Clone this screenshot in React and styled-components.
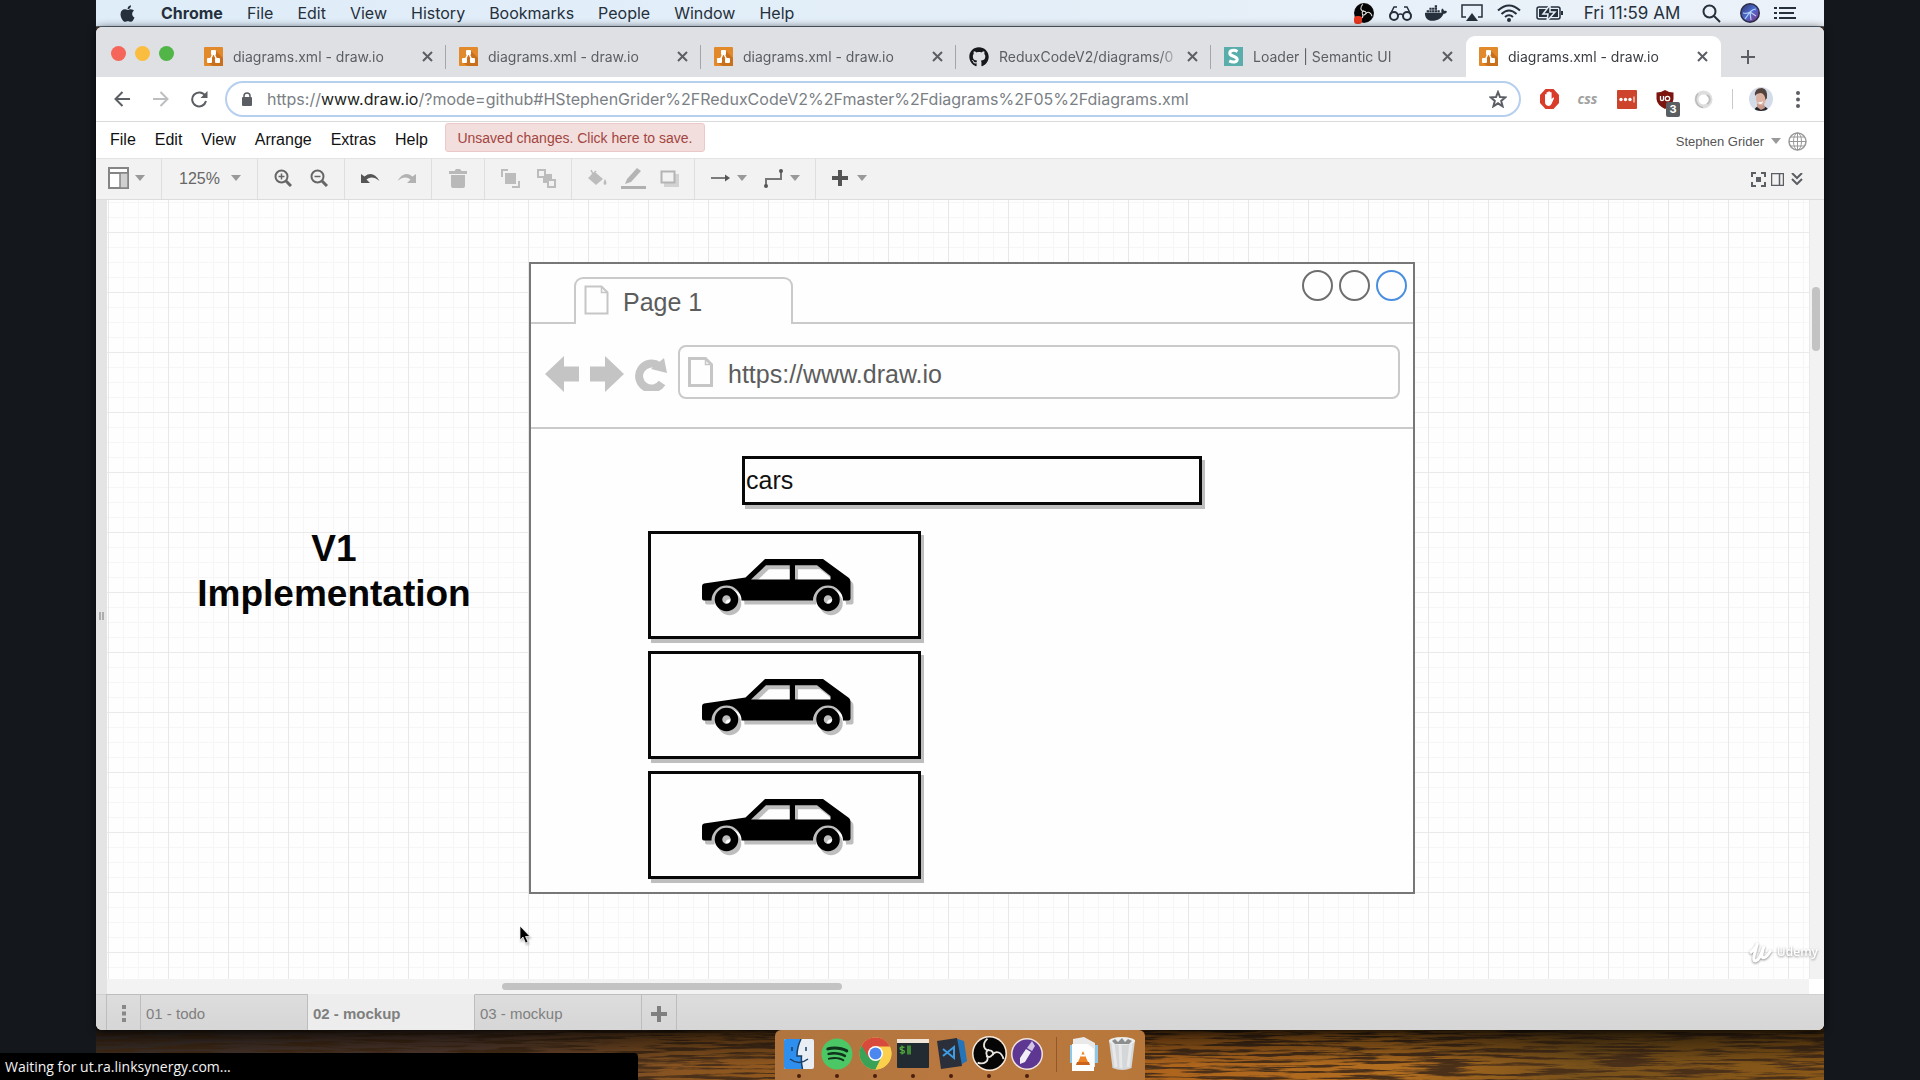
import React from "react";
import styled, { createGlobalStyle, css } from "styled-components";
import { FaApple, FaDocker, FaGithub, FaSpotify } from "react-icons/fa";

const helvetica = `"Liberation Sans", Arial, sans-serif`;
const system = `Inter, Roboto, "Liberation Sans", sans-serif`;

const GlobalStyle = createGlobalStyle`
  * { box-sizing: border-box; }
  body { margin: 0; background: #14181d; font-family: ${helvetica}; overflow: hidden; }
  button, input, select { font: inherit; color: inherit; background: none; border: 0; padding: 0; margin: 0; outline: 0; }
  a { color: inherit; text-decoration: none; }
  svg { display: block; flex: none; }
`;

/* ---------- desktop ---------- */
const Desktop = styled.div`
  position: relative;
  display: flex;
  flex-direction: column;
  height: 100vh;
  margin: 0 5%;
  background: #4a3426;
`;
const Wallpaper = styled.svg`
  position: absolute;
  bottom: 0;
  left: 0;
  width: 100%;
  height: 60px;
`;
const MenuBar = styled.header`
  position: relative;
  display: flex;
  align-items: center;
  height: 27px;
  padding: 0 24px 0 22px;
  background: linear-gradient(90deg, #dfedf9, #e3eef8 50%, #ecf2f9);
  border-bottom: 1px solid #5d6a77;
  font: 400 16px/26px ${system};
  color: #25303c;
`;
const MenuList = styled.nav`
  display: flex;
  gap: 24px;
  flex: 1;
`;
const MenuLink = styled.a`
  display: flex;
  align-items: center;
  white-space: nowrap;
  font-weight: ${(p) => (p.$bold ? 700 : 400)};
`;
const StatusItem = styled.button`
  display: flex;
  justify-content: center;
  align-items: center;
  width: ${(p) => p.$w || 36}px;
`;
const Clock = styled.time`
  width: 120px;
  text-align: center;
  font-size: 17px;
  white-space: nowrap;
`;

/* ---------- browser ---------- */
const BrowserWindow = styled.main`
  position: relative;
  display: flex;
  flex-direction: column;
  flex: 1;
  min-height: 0;
  border-radius: 6px;
  overflow: hidden;
  background: #fff;
  box-shadow: 0 1px 8px #000b;
`;
const TabStrip = styled.div`
  display: flex;
  align-items: flex-end;
  height: 50px;
  background: #dee0e4;
`;
const Lights = styled.div`
  display: flex;
  align-self: stretch;
  align-items: center;
  gap: 9px;
  width: 95px;
  padding: 3px 0 0 15px;
`;
const Light = styled.button`
  width: 15px;
  height: 15px;
  border-radius: 50%;
  background: ${(p) => p.$color};
`;
const TabBox = styled.div`
  position: relative;
  display: flex;
  align-items: center;
  gap: 10px;
  flex: 0 1 255px;
  min-width: 0;
  height: 41px;
  padding: 0 12px 0 13px;
  font: 400 14px/20px ${system};
  color: #5b5e63;
  &::after {
    content: "";
    position: absolute;
    right: 0;
    width: 1px;
    height: 24px;
    background: ${(p) => (p.$divider ? "#a2a5aa" : "transparent")};
  }
  ${(p) =>
    p.$active &&
    css`
      background: #fff;
      color: #3a3d42;
      border-radius: 9px 9px 0 0;
    `}
`;
const TabTitle = styled.span`
  flex: 1;
  min-width: 0;
  margin-right: -6px;
  overflow: hidden;
  white-space: nowrap;
  mask-image: linear-gradient(90deg, #000 88%, transparent);
`;
const IconButton = styled.button`
  position: relative;
  display: flex;
  align-items: center;
  justify-content: center;
  flex: none;
  width: ${(p) => p.$w || 36}px;
  height: ${(p) => p.$h || 36}px;
  color: ${(p) => p.$color || "#5b5e63"};
  opacity: ${(p) => (p.$dim ? 0.4 : 1)};
`;
const AddressRow = styled.div`
  display: flex;
  align-items: center;
  height: 45px;
  padding: 0 7px 0 6px;
  border-bottom: 1px solid #d9dadb;
`;
const Omnibox = styled.div`
  display: flex;
  align-items: center;
  flex: 1;
  height: 36px;
  margin: 0 9px 0 6px;
  padding: 0 5px 0 15px;
  border: 2px solid #b6cfee;
  border-radius: 18px;
  font: 400 16px/24px ${system};
  color: #7b7f85;
`;
const UrlText = styled.div`
  flex: 1;
  padding-left: 15px;
  white-space: nowrap;
  outline: 0;
`;
const Host = styled.span`
  color: #1d1f22;
`;
const Divider = styled.span`
  width: 1px;
  height: 20px;
  margin: 0 10px;
  background: #c9cacc;
`;
const ExtText = styled.span`
  font: italic 700 14px/20px "Open Sans", sans-serif;
  color: #a2a2a2;
`;
const Badge = styled.span`
  position: absolute;
  right: 4px;
  bottom: 0;
  width: 14px;
  height: 15px;
  border-radius: 2px;
  background: #5b5e61;
  color: #fff;
  font: 700 11px/15px ${system};
`;

/* ---------- editor ---------- */
const EditorMenu = styled.div`
  display: flex;
  align-items: center;
  height: 36px;
  padding: 0 17px 0 14px;
  font-size: 16px;
  color: #111;
`;
const EditorNav = styled.nav`
  display: flex;
  gap: 19px;
`;
const SaveNotice = styled.button`
  width: 260px;
  height: 29px;
  margin: -5px 0 0 17px;
  border: 1px solid #ecc9c8;
  border-radius: 3px;
  background: #f2dedd;
  color: #a2453f;
  font-size: 14px;
  white-space: nowrap;
`;
const Account = styled.button`
  display: flex;
  align-items: center;
  gap: 7px;
  margin-left: auto;
  padding-top: 2px;
  font-size: 13px;
  color: #555;
`;
const Toolbar = styled.div`
  display: flex;
  height: 42px;
  border-top: 1px solid #e3e3e3;
  border-bottom: 1px solid #dcdcdc;
  background: #f2f2f2;
  padding-right: 18px;
`;
const ToolGroup = styled.div`
  display: flex;
  align-items: center;
  padding: 0 ${(p) => p.$pad ?? 7}px 2px;
  border-right: 1px solid ${(p) => (p.$last ? "transparent" : "#dedede")};
`;
const DropButton = styled.button`
  display: flex;
  align-items: center;
  gap: ${(p) => p.$gap || 7}px;
  width: 53px;
  height: 36px;
  padding-left: ${(p) => p.$pl ?? 9}px;
  color: #555;
`;
const ZoomLabel = styled.label`
  display: flex;
  align-items: center;
  width: 96px;
  padding: 0 16px 2px 17px;
  border-right: 1px solid #dedede;
  font-size: 16px;
  color: #666;
`;
const ZoomSelect = styled.select`
  appearance: none;
  flex: 1;
  width: 50px;
`;
const ViewTools = styled.div`
  display: flex;
  align-items: center;
  margin-left: auto;
`;

const Workspace = styled.div`
  display: flex;
  flex: 1;
  min-height: 0;
`;
const SideHandle = styled.div`
  display: flex;
  align-items: center;
  justify-content: center;
  width: 11px;
  padding-top: 38px;
  background: #e4e4e4;
`;
const Editor = styled.div`
  display: flex;
  flex-direction: column;
  flex: 1;
  min-width: 0;
`;
const CanvasRow = styled.div`
  display: flex;
  flex: 1;
  min-height: 0;
`;
const Canvas = styled.section`
  position: relative;
  flex: 1;
  overflow: hidden;
  background-color: #fefefe;
  background-image: linear-gradient(90deg, #e8e8e8 1px, transparent 1px),
    linear-gradient(#eaeaea 1px, transparent 1px),
    linear-gradient(90deg, #f6f6f6 1px, transparent 1px),
    linear-gradient(#f6f6f6 1px, transparent 1px);
  background-size: 60px 60px, 60px 60px, 15px 15px, 15px 15px;
  background-position: 1px 32px;
`;
const VScroll = styled.div`
  width: 15px;
  padding: 87px 0 0 2px;
  background: #f2f2f2;
  border-left: 1px solid #e9e9e9;
`;
const HScroll = styled.div`
  display: flex;
  align-items: center;
  height: 15px;
  margin-right: 15px;
  padding-left: 23%;
  background: #f3f3f3;
`;
const Thumb = styled.div`
  width: ${(p) => p.$w};
  height: ${(p) => p.$h};
  border-radius: 4px;
  background: #c3c3c3;
`;
const PageTabs = styled.nav`
  display: flex;
  height: 36px;
  padding-left: 10px;
  background: linear-gradient(#dddddd, #d6d6d6);
  box-shadow: inset 0 1px #d0d0d0;
`;
const PageTab = styled.button`
  display: flex;
  align-items: center;
  justify-content: ${(p) => (p.$w < 100 ? "center" : "flex-start")};
  width: ${(p) => p.$w}px;
  padding: 2px 0 0 ${(p) => (p.$w < 100 ? 0 : 5)}px;
  border: 1px solid #bdbdbd;
  border-width: 1px 1px 0 0;
  color: #7f7f7f;
  font-size: 15px;
  font-weight: ${(p) => (p.$active ? 700 : 400)};
  background: ${(p) => (p.$active ? "#ededed" : "transparent")};
  border-top-color: ${(p) => (p.$active ? "#ededed" : "#bdbdbd")};
  &:first-child {
    border-left-width: 1px;
  }
`;

/* ---------- diagram nodes ---------- */
const Node = styled.div`
  position: absolute;
  left: ${(p) => p.$x}px;
  top: ${(p) => p.$y}px;
`;
const Heading = styled.h1`
  margin: 0;
  width: 290px;
  text-align: center;
  font: 700 37px/45px ${helvetica};
  color: #050505;
`;
const Mock = styled.div`
  display: flex;
  flex-direction: column;
  width: 886px;
  height: 632px;
  border: 2px solid #777;
  background: #fefefe;
  color: #5c5c5c;
  font-size: 25px;
`;
const MockTabs = styled.div`
  display: flex;
  height: 60px;
  align-items: flex-end;
`;
const Rule = styled.span`
  flex: ${(p) => (p.$w ? `0 0 ${p.$w}px` : 1)};
  height: 60px;
  display: flex;
  justify-content: flex-end;
  gap: 6px;
  padding: 6px 6px 0 0;
  border-bottom: 2px solid #cacaca;
`;
const MockTab = styled.div`
  display: flex;
  align-items: center;
  gap: 14px;
  width: 219px;
  height: 47px;
  padding: 0 0 3px 8px;
  border: 2px solid #cacaca;
  border-bottom: 0;
  border-radius: 9px 9px 0 0;
`;
const MockLabel = styled.span`
  padding-top: 4px;
`;
const Ring = styled.span`
  width: 31px;
  height: 31px;
  border: 2px solid ${(p) => p.$color || "#6e6e6e"};
  border-radius: 50%;
`;
const MockNav = styled.div`
  display: flex;
  align-items: center;
  gap: 11px;
  height: 105px;
  padding: 0 13px 3px 14px;
  border-bottom: 2px solid #cacaca;
`;
const MockUrl = styled.div`
  display: flex;
  align-items: center;
  gap: 15px;
  flex: 1;
  height: 54px;
  margin-bottom: 5px;
  padding: 1px 8px 0;
  border: 2px solid #cacaca;
  border-radius: 8px;
`;
const MockBody = styled.div`
  display: flex;
  flex-direction: column;
  gap: 26px;
  padding: 27px 0 0 117px;
`;
const SearchInput = styled.input`
  && {
    width: 460px;
    height: 49px;
    margin-left: 94px;
    padding: 0 1px 1px;
    border: 3px solid #080808;
    background: #fefefe;
    box-shadow: 3px 4px #bebebe;
    color: #111;
  }
`;
const CardList = styled.div`
  display: flex;
  flex-direction: column;
  gap: 12px;
`;
const Card = styled.div`
  display: flex;
  align-items: center;
  justify-content: center;
  width: 273px;
  height: 108px;
  padding-right: 16px;
  border: 3px solid #080808;
  box-shadow: 3px 4px #bebebe;
`;
const CarSvg = styled.svg`
  overflow: visible;
  filter: drop-shadow(3px 4px 0 #bebebe);
`;
const Watermark = styled.div`
  position: absolute;
  right: 6px;
  bottom: 67px;
  display: flex;
  align-items: center;
  gap: 4px;
  color: #fff;
  font: 600 12px/22px "Open Sans", sans-serif;
  filter: drop-shadow(0 1px 1px #8c8c8c);
`;
const Pointer = styled.svg`
  filter: drop-shadow(1px 2px 1px #0004);
`;

/* ---------- dock ---------- */
const DockRow = styled.footer`
  position: relative;
  display: flex;
  justify-content: center;
  height: 50px;
`;
const Dock = styled.div`
  display: flex;
  padding: 0 4px 0 5px;
  border-radius: 6px 6px 0 0;
  background: linear-gradient(90deg, #b0753f, #b9783f 50%, #b8773a);
`;
const DockItem = styled.button`
  position: relative;
  display: flex;
  align-items: center;
  justify-content: center;
  width: 38px;
  height: 47px;
  &::after {
    content: "";
    position: absolute;
    bottom: -1px;
    width: 4px;
    height: 4px;
    border-radius: 50%;
    background: ${(p) => (p.$running ? "#4b1d0c" : "transparent")};
  }
`;
const DockRule = styled.span`
  width: 1px;
  height: 35px;
  margin: 7px 8px 0 10px;
  background: #94592b;
`;
const LinkStatus = styled.div`
  position: fixed;
  left: 0;
  bottom: 0;
  width: 638px;
  height: 27px;
  padding-left: 5px;
  border-radius: 0 4px 0 0;
  background: #000;
  color: #f3f3f3;
  font: 400 14px/27px "Open Sans", "Noto Sans", sans-serif;
`;

/* ---------- drawings ---------- */
const Caret = ({ color = "#999" }) => (
  <svg width="10" height="6" viewBox="0 0 10 6"><path d="M0 0h10L5 6z" fill={color} /></svg>
);
const Stroke = ({ size = 20, w = 2, h, children }) => (
  <svg width={size} height={h || size} viewBox={`0 0 ${size} ${h || size}`} fill="none" stroke="currentColor" strokeWidth={w}>
    {children}
  </svg>
);
const DrawioIcon = () => (
  <svg width="19" height="19" viewBox="0 0 19 19">
    <rect width="19" height="19" rx="1" fill="#e28a2b" />
    <path d="M12 4l7 7v8H9l-5-3z" fill="#c9701c" />
    <path d="M9.500 6L6 13M9.500 6L13 13" stroke="#fff" strokeWidth="1.500" />
    <rect x="7" y="3" width="5" height="5" rx="1" fill="#fff" />
    <rect x="3" y="11" width="5" height="5" rx="1" fill="#fff" />
    <rect x="11" y="11" width="5" height="5" rx="1" fill="#fff" />
  </svg>
);
const SemanticIcon = () => (
  <svg width="19" height="19" viewBox="0 0 19 19">
    <rect width="19" height="19" fill="#59aeab" />
    <path d="M13.500 4.500C10 2.500 5.500 3.200 5.800 6.500c.3 3 7.400 2.500 7.400 5.800 0 3.200-4.500 3.400-8 1.600" fill="none" stroke="#fff" strokeWidth="3" />
  </svg>
);
const CloseIcon = () => <Stroke size={11}><path d="M1 1l9 9M10 1l-9 9" /></Stroke>;
const ObsIcon = ({ size, rim }) => (
  <svg width={size} height={size} viewBox="0 0 34 34">
    <circle cx="17" cy="17" r="17" fill={rim} />
    <circle cx="17" cy="17" r="15.500" fill="#050505" />
    {[0, 120, 240].map((a) => (
      <path key={a} transform={`rotate(${a} 17 17)`} d="M15 2.500C10 7 10.500 13.500 17 14q4 .5 3.500 4.500"
        fill="none" stroke="#e8e4e0" strokeWidth="1.800" />
    ))}
  </svg>
);
const PageIcon = ({ w = 2 }) => (
  <svg width="25" height="30" viewBox="0 0 25 30" fill="none" stroke="#c6c6c6" strokeWidth={w}>
    <path d="M1.500 1.500h16l6 6v21h-22z" /><path d="M17.500 1.500v6h6" strokeWidth="1.500" />
  </svg>
);
const Car = () => (
  <CarSvg width="149" height="52" viewBox="0 0 149 52">
    <path fillRule="evenodd"
      d="M63 0h58l26 19q1.500 1.500 1.500 4v16.500q0 2-2 2H141a15 15 0 0 0-30 0H39.500a15 15 0 0 0-30 0H2q-2 0-2-2V27q0-2 2-2.500L43.500 18.500zM49 20.500h38.800V6.300H64zM93 6.300v14.200h35.500V17L115 6.300z" />
    {[24.5, 126].map((x) => <circle key={x} cx={x} cy="40.500" r="8" fill="none" stroke="#000" strokeWidth="7.500" />)}
  </CarSvg>
);
const Siri = () => (
  <svg width="20" height="20" viewBox="0 0 20 20">
    <defs><linearGradient id="siri" x1="0" y1="0" x2="1" y2="1"><stop offset="0" stopColor="#33306a" /><stop offset=".5" stopColor="#4a6fd4" /><stop offset="1" stopColor="#8b2d7b" /></linearGradient></defs>
    <circle cx="10" cy="10" r="10" fill="#2a2e48" /><circle cx="10" cy="10" r="8.500" fill="url(#siri)" />
    <path d="M10 9L5 16M10 9l1 8M10 9l6 4M3 10q4 1 7-1 3-3 6-3" fill="none" stroke="#cfe8ff" strokeWidth="1.200" opacity=".8" />
  </svg>
);

const tabs = [
  { title: "diagrams.xml - draw.io", icon: <DrawioIcon />, divider: true },
  { title: "diagrams.xml - draw.io", icon: <DrawioIcon />, divider: true },
  { title: "diagrams.xml - draw.io", icon: <DrawioIcon />, divider: true },
  { title: "ReduxCodeV2/diagrams/0", icon: <FaGithub size={20} color="#16181b" />, divider: true },
  { title: "Loader | Semantic UI", icon: <SemanticIcon /> },
  { title: "diagrams.xml - draw.io", icon: <DrawioIcon />, active: true },
];

function SystemBar() {
  return (
    <MenuBar>
      <MenuList aria-label="System menu">
        <MenuLink href="#apple" aria-label="Apple"><FaApple size={19} /></MenuLink>
        {["Chrome", "File", "Edit", "View", "History", "Bookmarks", "People", "Window", "Help"].map((m, i) => (
          <MenuLink key={m} href={`#${m}`} $bold={i === 0}>{m}</MenuLink>
        ))}
      </MenuList>
      <StatusItem aria-label="OBS">
        <svg width="21" height="21" viewBox="0 0 21 21"><ObsIcon size={20} rim="#111" /><rect x="0" y="13" width="8" height="8" rx="3" fill="#e8371f" /></svg>
      </StatusItem>
      <StatusItem aria-label="Reader">
        <Stroke size={23} h={16} w={2}><circle cx="5" cy="11" r="4" /><circle cx="18" cy="11" r="4" /><path d="M9 10q2.500-2 5 0M1 10L5 2l3 0M22 10L18 2l-3 0" strokeWidth="1.500" /></Stroke>
      </StatusItem>
      <StatusItem aria-label="Docker"><FaDocker size={22} /></StatusItem>
      <StatusItem aria-label="AirPlay">
        <svg width="22" height="18" viewBox="0 0 22 18"><path d="M5 13H1V1h20v12h-4" fill="none" stroke="currentColor" strokeWidth="1.500" /><path d="M11 9l6 8H5z" fill="currentColor" /></svg>
      </StatusItem>
      <StatusItem aria-label="Wi-Fi" $w={38}>
        <Stroke size={24} h={18} w={2}><path d="M1 6.500q11-10 22 0M4.500 10q7.500-7 15 0M8 13q4-3.500 8 0" /><circle cx="12" cy="16" r="1" fill="currentColor" /></Stroke>
      </StatusItem>
      <StatusItem aria-label="Battery" $w={44}>
        <svg width="28" height="16" viewBox="0 0 28 16"><rect x="1" y="2" width="23" height="12" rx="2" fill="none" stroke="currentColor" strokeWidth="1.500" /><rect x="3" y="4" width="19" height="8" fill="currentColor" /><path d="M26 6v4" stroke="currentColor" strokeWidth="2" /><path d="M14 0L7 9h5l-1 7 8-9h-5z" fill="currentColor" stroke="#e8f0f8" strokeWidth="1.500" /></svg>
      </StatusItem>
      <Clock>Fri 11:59 AM</Clock>
      <StatusItem aria-label="Search" $w={38}><Stroke size={19} w={2}><circle cx="7.500" cy="7.500" r="6" /><path d="M12 12l6 6" /></Stroke></StatusItem>
      <StatusItem aria-label="Siri" $w={40}><Siri /></StatusItem>
      <StatusItem aria-label="Notifications" $w={30}><Stroke size={22} h={14} w={2}><path d="M5 2h17M5 7h15M5 12h17M0 2h3M0 7h3M0 12h3" /></Stroke></StatusItem>
    </MenuBar>
  );
}

function BrowserChrome() {
  return (
    <>
      <TabStrip>
        <Lights>
          <Light $color="#f5655a" aria-label="Close window" />
          <Light $color="#fbbd3f" aria-label="Minimize window" />
          <Light $color="#51b548" aria-label="Zoom window" />
        </Lights>
        {tabs.map((t, i) => (
          <TabBox key={i} $active={t.active} $divider={t.divider}>
            {t.icon}
            <TabTitle>{t.title}</TabTitle>
            <IconButton $w={14} $h={20} aria-label="Close tab"><CloseIcon /></IconButton>
          </TabBox>
        ))}
        <IconButton $w={54} $h={41} aria-label="New tab"><Stroke size={14} w={2}><path d="M7 0v14M0 7h14" /></Stroke></IconButton>
      </TabStrip>
      <AddressRow>
        <IconButton $w={39} aria-label="Back"><Stroke size={16}><path d="M16 8H2M8.500 1L1.500 8l7 7" /></Stroke></IconButton>
        <IconButton $w={39} $dim aria-label="Forward"><Stroke size={16}><path d="M0 8h14M7.500 1l7 7-7 7" /></Stroke></IconButton>
        <IconButton $w={39} aria-label="Reload"><svg width="17" height="17" viewBox="0 0 17 17"><path d="M14 4.500A7 7 0 1 0 15 10" fill="none" stroke="currentColor" strokeWidth="2" /><path d="M16.500 0v7h-7z" fill="currentColor" /></svg></IconButton>
        <Omnibox>
          <svg width="10" height="14" viewBox="0 0 10 14"><rect y="5" width="10" height="9" rx="1" fill="#5b5e63" /><path d="M2 6V4a3 3 0 0 1 6 0v2" fill="none" stroke="#5b5e63" strokeWidth="1.500" /></svg>
          <UrlText role="textbox" aria-label="Address" tabIndex={0}>
            https://<Host>www.draw.io</Host>/?mode=github#HStephenGrider%2FReduxCodeV2%2Fmaster%2Fdiagrams%2F05%2Fdiagrams.xml
          </UrlText>
          <IconButton $w={32} $h={32} aria-label="Bookmark"><Stroke size={18} w={2}><path d="M9 2l2 5 5.500.3-4.300 3.600 1.400 5.400L9 13.300l-4.600 3 1.400-5.400L1.500 7.300 7 7z" /></Stroke></IconButton>
        </Omnibox>
        <IconButton $w={38} aria-label="AdBlock">
          <svg width="19" height="20" viewBox="0 0 19 20"><path d="M5.500 0h8L19 6v8l-5.500 6h-8L0 14V6z" fill="#d93c28" /><path d="M5 9.500V5.500q1-1 1.500 0V8V3.500q1-1 1.700 0V8V2.700q1-1 1.700 0V8V3.500q1-1 1.700 0V10l1.500-1.500q1.200-.3 1 .7L11.500 15q-1 2-3 2Q5 16.500 5 13z" fill="#fff" /></svg>
        </IconButton>
        <IconButton $w={39} aria-label="CSS"><ExtText>css</ExtText></IconButton>
        <IconButton $w={39} aria-label="LastPass"><svg width="20" height="19" viewBox="0 0 20 19"><rect width="20" height="19" rx="1" fill="#cd432c" /><circle cx="4" cy="9.500" r="1.700" fill="#fff" /><circle cx="8.500" cy="9.500" r="1.700" fill="#fff" /><circle cx="13" cy="9.500" r="1.700" fill="#fff" /><path d="M17 6.500v6" stroke="#fff" /></svg></IconButton>
        <IconButton $w={38} aria-label="uBlock">
          <svg width="18" height="19" viewBox="0 0 18 19"><path d="M9 0q4 2.500 8.500 2.500V9Q17 15 9 19 1 15 .5 9V2.500Q5 2.500 9 0z" fill="#7c1510" /><path d="M4.500 6v3.500q0 1 1.500 1t1.500-1V6" fill="none" stroke="#fff" strokeWidth="1.300" /><circle cx="11.500" cy="8.500" r="2.200" fill="none" stroke="#fff" strokeWidth="1.300" /></svg>
          <Badge>3</Badge>
        </IconButton>
        <IconButton $w={38} aria-label="Extension"><svg width="19" height="19" viewBox="0 0 19 19"><circle cx="9.500" cy="9.500" r="7" fill="none" stroke="#dedede" strokeWidth="4" /><path d="M4 3.500a8.500 8.500 0 0 0 5 14" fill="none" stroke="#bbb" strokeWidth="1.500" /><path d="M13 5a5 5 0 0 1 0 9" fill="none" stroke="#bcbcbc" strokeWidth="1.500" /></svg></IconButton>
        <Divider />
        <IconButton $w={36} aria-label="Profile">
          <svg width="24" height="24" viewBox="0 0 24 24"><defs><clipPath id="av"><circle cx="12" cy="12" r="12" /></clipPath></defs><g clipPath="url(#av)"><rect width="24" height="24" fill="#d4dbe9" /><path d="M5 24q1-5 7-5t8 5z" fill="#23252c" /><path d="M8 17h7l1 4-4 2-4-3z" fill="#c99a8a" /><ellipse cx="12" cy="11.500" rx="5" ry="7" fill="#dcb2a3" /><path d="M6 9q-1-8 7-8 6 1 5 10l-1.500 2Q16 7 12 6 8 6 6 9z" fill="#54423c" /><path d="M9 15q3 1 5-1-.5 3-2.500 3T9 15z" fill="#fff" /></g></svg>
        </IconButton>
        <IconButton $w={38} aria-label="Chrome menu"><svg width="4" height="17" viewBox="0 0 4 17" fill="currentColor"><circle cx="2" cy="2" r="2" /><circle cx="2" cy="8.500" r="2" /><circle cx="2" cy="15" r="2" /></svg></IconButton>
      </AddressRow>
    </>
  );
}

const Magnifier = ({ plus }) => (
  <Stroke size={18} w={2}><circle cx="7.500" cy="7.500" r="6" /><path d="M12 12l5 5" strokeWidth="3" /><path d={plus ? "M4.500 7.500h6M7.500 4.500v6" : "M4.500 7.500h6"} strokeWidth="1.500" /></Stroke>
);

function EditorToolbar() {
  return (
    <Toolbar role="toolbar">
      <ToolGroup $pad={6}>
        <DropButton $pl={6} $gap={6} aria-label="View panels">
          <svg width="21" height="22" viewBox="0 0 21 22"><rect x="1" y="1" width="19" height="20" fill="#fff" stroke="#858585" strokeWidth="2" /><path d="M1 6h19" stroke="#858585" strokeWidth="2" /><rect x="12" y="6" width="8" height="15" fill="#d0d0d0" stroke="#858585" strokeWidth="1.500" /></svg>
          <Caret />
        </DropButton>
      </ToolGroup>
      <ZoomLabel>
        <ZoomSelect aria-label="Zoom" defaultValue="125%"><option>125%</option></ZoomSelect>
        <Caret />
      </ZoomLabel>
      <ToolGroup>
        <IconButton $color="#666" aria-label="Zoom in"><Magnifier plus /></IconButton>
        <IconButton $color="#666" aria-label="Zoom out"><Magnifier /></IconButton>
      </ToolGroup>
      <ToolGroup>
        <IconButton $color="#555" aria-label="Undo"><svg width="19" height="11" viewBox="0 0 19 11" fill="currentColor"><path d="M0 1v9h9L5.500 6.500Q11 2 18.500 8 12-3 3.500 3.500z" /></svg></IconButton>
        <IconButton $color="#555" $dim aria-label="Redo"><svg width="19" height="11" viewBox="0 0 19 11" fill="currentColor"><path d="M19 1v9h-9l3.500-3.500Q8 2 .5 8 7-3 15.500 3.500z" /></svg></IconButton>
      </ToolGroup>
      <ToolGroup $pad={8}>
        <IconButton $color="#b9b9b9" aria-label="Delete"><svg width="18" height="19" viewBox="0 0 18 19" fill="currentColor"><path d="M0 2h5.500L7 0h4l1.500 2H18v3H0zM2 6h14v11q0 2-2 2H4q-2 0-2-2z" /></svg></IconButton>
      </ToolGroup>
      <ToolGroup>
        <IconButton $color="#bcbcbc" aria-label="To front"><svg width="19" height="19" viewBox="0 0 19 19"><path d="M0 0h7v2H2v6H0zM19 19h-8v-2h6v-5h2z" fill="currentColor" /><rect x="4" y="4" width="11" height="11" fill="currentColor" /></svg></IconButton>
        <IconButton $color="#bcbcbc" aria-label="To back"><svg width="19" height="19" viewBox="0 0 19 19"><rect x="6" y="5" width="9" height="9" fill="currentColor" /><g fill="#f2f2f2" stroke="currentColor" strokeWidth="2"><rect x="1" y="1" width="7" height="7" /><rect x="11" y="11" width="7" height="7" /></g></svg></IconButton>
      </ToolGroup>
      <ToolGroup>
        <IconButton $color="#bcbcbc" aria-label="Fill"><svg width="20" height="18" viewBox="0 0 20 18"><path d="M8 3l8 7-7 6-8-7z" fill="currentColor" /><path d="M8 9L4 1M4 7l5-5" stroke="currentColor" strokeWidth="1.500" /><path d="M18 10q3 5 0 6-3-1 0-6z" fill="currentColor" /></svg></IconButton>
        <IconButton $color="#bcbcbc" aria-label="Line color"><svg width="25" height="22" viewBox="0 0 25 22"><path d="M4 17l2-5L16 1l4 3L10 15z" fill="#b4b4b4" /><path d="M0 20.500h25" stroke="#b0b0b0" strokeWidth="3" /></svg></IconButton>
        <IconButton $color="#bcbcbc" aria-label="Shadow"><svg width="19" height="17" viewBox="0 0 19 17"><rect x="4" y="4" width="15" height="13" fill="#d2d2d2" /><rect x="1.500" y="1.500" width="13" height="11" fill="#f2f2f2" stroke="#b4b4b4" strokeWidth="2" /></svg></IconButton>
      </ToolGroup>
      <ToolGroup>
        <DropButton aria-label="Connection"><svg width="19" height="8" viewBox="0 0 19 8"><path d="M0 4h15" stroke="#555" strokeWidth="1.500" /><path d="M14 .5l5 3.500-5 3.500z" fill="#555" /></svg><Caret /></DropButton>
        <DropButton aria-label="Waypoints"><svg width="19" height="19" viewBox="0 0 19 19"><path d="M2 17V10h15V2" fill="none" stroke="#777" strokeWidth="2" /><rect y="15" width="4" height="4" rx="2" fill="#555" /><rect x="15" width="4" height="4" rx="2" fill="#555" /></svg><Caret /></DropButton>
      </ToolGroup>
      <ToolGroup $last>
        <DropButton $gap={9} aria-label="Insert"><Stroke size={16} w={4}><path d="M8 0v16M0 8h16" /></Stroke><Caret /></DropButton>
      </ToolGroup>
      <ViewTools>
        <IconButton $w={19} $h={20} aria-label="Fullscreen"><Stroke size={15} w={2}><path d="M1 5V1h4M10 1h4v4M14 10v4h-4M5 14H1v-4" /><rect x="5" y="5" width="5" height="5" fill="currentColor" stroke="none" /></Stroke></IconButton>
        <IconButton $w={19} $h={20} aria-label="Format"><Stroke size={13} w={1}><path d="M.5.5h12v12H.5zM8.500.5v12" strokeWidth="1.500" /></Stroke></IconButton>
        <IconButton $w={19} $h={20} aria-label="Collapse"><Stroke size={12} w={2}><path d="M1 0l5 5 5-5M1 6l5 5 5-5" /></Stroke></IconButton>
      </ViewTools>
    </Toolbar>
  );
}

function MockBrowser() {
  return (
    <Mock>
      <MockTabs>
        <Rule $w={43} />
        <MockTab><PageIcon /><MockLabel>Page 1</MockLabel></MockTab>
        <Rule><Ring /><Ring /><Ring $color="#4a8fdf" /></Rule>
      </MockTabs>
      <MockNav>
        <svg width="34" height="36" viewBox="0 0 34 36" fill="#c4c4c4"><path d="M0 18L19 0v10.500h15v15H19V36z" /></svg>
        <svg width="34" height="36" viewBox="0 0 34 36" fill="#c4c4c4"><path d="M34 18L15 0v10.500H0v15h15V36z" /></svg>
        <svg width="32" height="34" viewBox="0 0 32 34"><path d="M27 26A12.500 12.500 0 1 1 24 9" fill="none" stroke="#c4c4c4" strokeWidth="8" /><path d="M29 1l3 15-16-4z" fill="#c4c4c4" /></svg>
        <MockUrl><PageIcon w={3} /><MockLabel>https://www.draw.io</MockLabel></MockUrl>
      </MockNav>
      <MockBody>
        <SearchInput aria-label="Search term" defaultValue="cars" />
        <CardList>{[0, 1, 2].map((i) => <Card key={i}><Car /></Card>)}</CardList>
      </MockBody>
    </Mock>
  );
}

const Chrome = () => (
  <svg width="33" height="33" viewBox="0 0 33 33">
    <circle cx="16.500" cy="16.500" r="16" fill="#fbd04c" />
    <path d="M2.600 8.500A16 16 0 0 0 16.500 32.500L23 20 16.500 16.500z" fill="#3aa257" />
    <path d="M16.500 9.500h14.400A16 16 0 0 1 16.500 32.500L22.500 20z" fill="#fbd04c" />
    <path d="M2.600 8.500L10 21l6.500-11.500h14.400l-.5-1A16 16 0 0 0 2.600 8.500z" fill="#d84b3c" />
    <circle cx="16.500" cy="16.500" r="7.500" fill="#fff" /><circle cx="16.500" cy="16.500" r="6" fill="#4b87ee" />
  </svg>
);

function DockBar() {
  return (
    <DockRow>
      <Dock>
        <DockItem $running aria-label="Finder"><svg width="30" height="30" viewBox="0 0 30 30"><rect width="30" height="30" rx="2" fill="#e9edf4" /><path d="M2 0h15q-4 8-4 17h4.500q-.5 6 1 13H2q-2 0-2-2V2q0-2 2-2z" fill="#2f8fee" /><path d="M8 8v4M22 8v4M6 20q9 7 18 0M17 0q-4 8-4 17h4.500q-.5 6 1 13" fill="none" stroke="#1b3f66" strokeWidth="1.500" /></svg></DockItem>
        <DockItem $running aria-label="Spotify"><svg width="32" height="32" viewBox="0 0 32 32"><circle cx="16" cy="16" r="12" fill="#10331c" /><FaSpotify size={32} color="#4cc765" /></svg></DockItem>
        <DockItem $running aria-label="Chrome"><Chrome /></DockItem>
        <DockItem $running aria-label="Terminal"><svg width="32" height="29" viewBox="0 0 32 29"><rect width="32" height="29" rx="1" fill="#212b31" /><rect width="32" height="4" fill="#f1e6da" /><path d="M5 6.500v9M7.500 8.500Q3 7 3 9.500q0 1.200 2.200 1.600Q7.500 11.500 7.500 12.800 7 15 2.800 13.500" fill="none" stroke="#54b33c" strokeWidth="1.200" /><rect x="10" y="6.500" width="4" height="9" fill="#3f8a35" /></svg></DockItem>
        <DockItem $running aria-label="Code"><svg width="32" height="33" viewBox="0 0 32 33"><path d="M20 1l9 3 3 20-8 5-14 1z" fill="#2374b8" /><path d="M2 4l20-3 5 28-21 3z" fill="#2a2f39" /><path d="M8 12l11 9V10L8 19" fill="none" stroke="#3f9be2" strokeWidth="2" /></svg></DockItem>
        <DockItem $running aria-label="OBS"><ObsIcon size={35} rim="#f6e9dc" /></DockItem>
        <DockItem $running aria-label="Utility knife"><svg width="32" height="32" viewBox="0 0 32 32"><circle cx="16" cy="16" r="16" fill="#f0e3e0" /><circle cx="16" cy="16" r="14.500" fill="#5d3791" /><path d="M9 26V20L15 11l5 3-6 10z" fill="#f2eef8" /><path d="M16 10l5-7 3 5-3 5z" fill="#d2c4e4" /></svg></DockItem>
        <DockRule />
        <DockItem aria-label="Downloads"><svg width="30" height="34" viewBox="0 0 30 34"><path d="M1 8h28v18H1z" fill="#8fc7e8" /><path d="M4 2l11-2 11 6v24H4z" fill="#e9e9e9" /><path d="M3 7h16l6 5v22H3z" fill="#fdfdfd" /><path d="M14 14l5 11H9z" fill="#ec8126" /><path d="M12 18.500h4" stroke="#fff" strokeWidth="2" /><path d="M8 25h12l1 3H7z" fill="#c9631c" /></svg></DockItem>
        <DockItem aria-label="Trash"><svg width="28" height="33" viewBox="0 0 28 33"><path d="M1 3h26l-3.500 28q-9 4-19 0z" fill="#d4d6d8" /><path d="M5 6l3 24M12 7l1 24M23 6l-3 24" stroke="#e6e8e9" strokeWidth="3" /><ellipse cx="14" cy="4" rx="13" ry="4" fill="#eceded" /><path d="M4 4l3-2 3 3 4-4 3 4 3-3 4 2-3 3H7z" fill="#8b8d8e" /></svg></DockItem>
      </Dock>
    </DockRow>
  );
}

export default function App() {
  return (
    <>
      <GlobalStyle />
      <Desktop>
        <Wallpaper aria-hidden="true" preserveAspectRatio="none">
          <defs>
            <linearGradient id="wood">
              <stop offset="0" stopColor="#453730" /><stop offset=".22" stopColor="#5c4032" /><stop offset=".34" stopColor="#8a5520" />
              <stop offset=".6" stopColor="#ad631c" /><stop offset=".75" stopColor="#b26e20" /><stop offset=".86" stopColor="#76501a" /><stop offset="1" stopColor="#8a5818" />
            </linearGradient>
            <filter id="grain" x="0" y="0" width="100%" height="100%">
              <feTurbulence type="fractalNoise" baseFrequency="0.016 0.3" numOctaves="5" seed="11" />
              <feColorMatrix values="0 0 0 0 0.07  0 0 0 0 0.03  0 0 0 0 0.01  5 0 0 0 -2.2" />
            </filter>
            <linearGradient id="shade" x2="0" y2="1"><stop offset="0" stopColor="#000" stopOpacity=".8" /><stop offset=".75" stopColor="#000" stopOpacity="0" /></linearGradient>
          </defs>
          <rect width="100%" height="60" fill="url(#wood)" />
          <rect width="100%" height="60" filter="url(#grain)" />
          <rect width="100%" height="60" fill="url(#shade)" />
        </Wallpaper>
        <SystemBar />
        <BrowserWindow>
          <BrowserChrome />
          <EditorMenu>
            <EditorNav aria-label="Editor menu">
              {["File", "Edit", "View", "Arrange", "Extras", "Help"].map((m) => <MenuLink key={m} href={`#${m}`}>{m}</MenuLink>)}
            </EditorNav>
            <SaveNotice>Unsaved changes. Click here to save.</SaveNotice>
            <Account>
              Stephen Grider <Caret />
              <svg width="19" height="19" viewBox="0 0 19 19" fill="none" stroke="#999"><circle cx="9.500" cy="9.500" r="8.500" strokeWidth="1.500" /><ellipse cx="9.500" cy="9.500" rx="4" ry="8.500" /><path d="M9.500 1v17M1 9.500h17M2.500 5h14M2.500 14h14" /></svg>
            </Account>
          </EditorMenu>
          <EditorToolbar />
          <Workspace>
            <SideHandle><svg width="5" height="8" viewBox="0 0 5 8"><path d="M1 0v8M4 0v8" stroke="#777" /></svg></SideHandle>
            <Editor>
              <CanvasRow>
                <Canvas>
                  <Node $x={82} $y={326}><Heading>V1<br />Implementation</Heading></Node>
                  <Node $x={422} $y={62}><MockBrowser /></Node>
                  <Node $x={412} $y={725}><Pointer width="12" height="19" viewBox="0 0 12 19"><path d="M1 1v14l3-3 2.500 6 2.500-1-2.500-5.500H11z" fill="#000" stroke="#fff" strokeWidth=".7" /></Pointer></Node>
                </Canvas>
                <VScroll><Thumb $w="8px" $h="64px" /></VScroll>
              </CanvasRow>
              <HScroll><Thumb $w="26%" $h="7px" /></HScroll>
            </Editor>
          </Workspace>
          <PageTabs aria-label="Pages">
            <PageTab $w={35} aria-label="Page list"><svg width="4" height="17" viewBox="0 0 4 17" fill="#888"><path d="M0 0h4v4H0zM0 6.500h4v4H0zM0 13h4v4H0z" /></svg></PageTab>
            <PageTab $w={167}>01 - todo</PageTab>
            <PageTab $w={167} $active>02 - mockup</PageTab>
            <PageTab $w={167}>03 - mockup</PageTab>
            <PageTab $w={35} aria-label="Insert page"><Stroke size={16} w={4}><path d="M8 0v16M0 8h16" /></Stroke></PageTab>
          </PageTabs>
          <Watermark>
            <svg width="24" height="22" viewBox="0 0 24 22"><path d="M1 12Q8 6 8.500 2 7 8 5 15q-1 5 1.500 5Q11 19 15 5q-3 10-1.500 11.500Q17 18 22 9" fill="none" stroke="#fff" strokeWidth="3" /></svg>
            <span>Udemy</span>
          </Watermark>
        </BrowserWindow>
        <DockBar />
      </Desktop>
      <LinkStatus role="status">Waiting for ut.ra.linksynergy.com...</LinkStatus>
    </>
  );
}
